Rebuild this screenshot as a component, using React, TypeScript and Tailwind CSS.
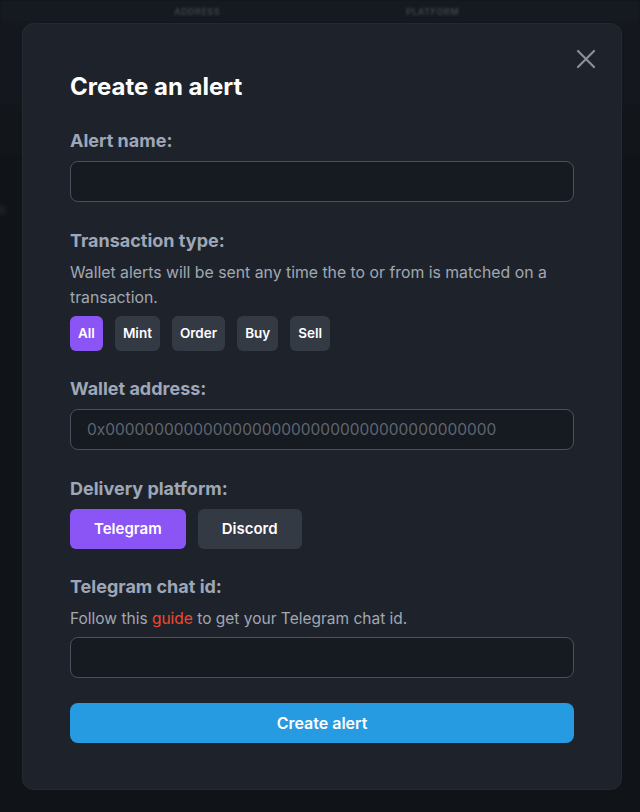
import React, { useState } from 'react';

const txTypes = ['All', 'Mint', 'Order', 'Buy', 'Sell'];
const platforms = ['Telegram', 'Discord'];

export default function App() {
    const [txType, setTxType] = useState('All');
    const [platform, setPlatform] = useState('Telegram');

    return (
        <div className="relative h-[812px] w-[640px] overflow-hidden bg-[#101318] font-['Inter',sans-serif]">
            {/* page behind the modal */}
            <div className="flex h-[23px] items-center bg-[#151920] text-[9px] font-bold tracking-wider text-[#3a4049] blur-[1px]">
                <span className="ml-[174px]">ADDRESS</span>
                <span className="ml-[186px]">PLATFORM</span>
            </div>
            <div className="h-[82px] bg-[#14181e]" />
            <div className="h-[50px] bg-[#12161b]" />
            <div className="h-[110px] bg-[#101318]">
                <div className="ml-[-4px] mt-[50px] h-[10px] w-[10px] rounded-full bg-[#1c2027] blur-[2px]" />
            </div>

            {/* modal */}
            <div className="absolute left-[22px] top-[23px] h-[767px] w-[600px] rounded-xl border border-white/[0.03] bg-[#1e232b] px-[47px] pt-[48px]">
                <button className="absolute right-[25px] top-[25px] text-[#8b9097]">
                    <svg width="20" height="20" viewBox="0 0 20 20" fill="none" stroke="currentColor" strokeWidth="2.2" strokeLinecap="round">
                        <path d="M2 2L18 18M18 2L2 18" />
                    </svg>
                </button>

                <h2 className="text-[24px] font-bold leading-[30px] text-white">Create an alert</h2>

                {/* Alert name */}
                <label className="mt-[27px] block text-[18px] font-bold leading-6 text-[#9ea7b8]">Alert name:</label>
                <input
                    type="text"
                    className="mt-2 block h-[41px] w-full rounded-lg border border-[#4b515b] bg-[#161a21] px-4 text-[16px] text-white focus:outline-none"
                />

                {/* Transaction type */}
                <label className="mt-[27px] block text-[18px] font-bold leading-6 text-[#9ea7b8]">Transaction type:</label>
                <p className="mt-[7px] text-[15.8px] leading-[25px] text-[#a1a8b3]">
                    Wallet alerts will be sent any time the to or from is matched on a transaction.
                </p>
                <div className="mt-[6px] flex gap-3">
                    {txTypes.map((t) => (
                        <button
                            key={t}
                            onClick={() => setTxType(t)}
                            className={`h-[35px] rounded-md px-2 text-[13.5px] font-semibold text-white ${txType === t ? 'bg-[#8b55f6]' : 'bg-[#343a44]'}`}
                        >
                            {t}
                        </button>
                    ))}
                </div>

                {/* Wallet address */}
                <label className="mt-[26px] block text-[18px] font-bold leading-6 text-[#9ea7b8]">Wallet address:</label>
                <input
                    type="text"
                    placeholder="0x0000000000000000000000000000000000000000"
                    className="mt-2 block h-[41px] w-full rounded-lg border border-[#4b515b] bg-[#161a21] px-4 text-[15.5px] text-white placeholder:text-[#5f6670] focus:outline-none"
                />

                {/* Delivery platform */}
                <label className="mt-[27px] block text-[18px] font-bold leading-6 text-[#9ea7b8]">Delivery platform:</label>
                <div className="mt-2 flex gap-3">
                    {platforms.map((p) => (
                        <button
                            key={p}
                            onClick={() => setPlatform(p)}
                            className={`h-[40px] rounded-md px-6 text-[15px] font-semibold text-white ${platform === p ? 'bg-[#8b55f6]' : 'bg-[#343a44]'}`}
                        >
                            {p}
                        </button>
                    ))}
                </div>

                {/* Telegram chat id */}
                <label className="mt-[26px] block text-[18px] font-bold leading-6 text-[#9ea7b8]">Telegram chat id:</label>
                <p className="mt-[7px] text-[15.5px] leading-[25px] text-[#a1a8b3]">
                    Follow this <span className="text-[#ef4a2b]">guide</span> to get your Telegram chat id.
                </p>
                <input
                    type="text"
                    className="mt-[6px] block h-[41px] w-full rounded-lg border border-[#4b515b] bg-[#161a21] px-4 text-[16px] text-white focus:outline-none"
                />

                <button className="mt-[25px] block h-[40px] w-full rounded-lg bg-[#279be1] text-[16px] font-semibold text-white">
                    Create alert
                </button>
            </div>
        </div>
    );
}
